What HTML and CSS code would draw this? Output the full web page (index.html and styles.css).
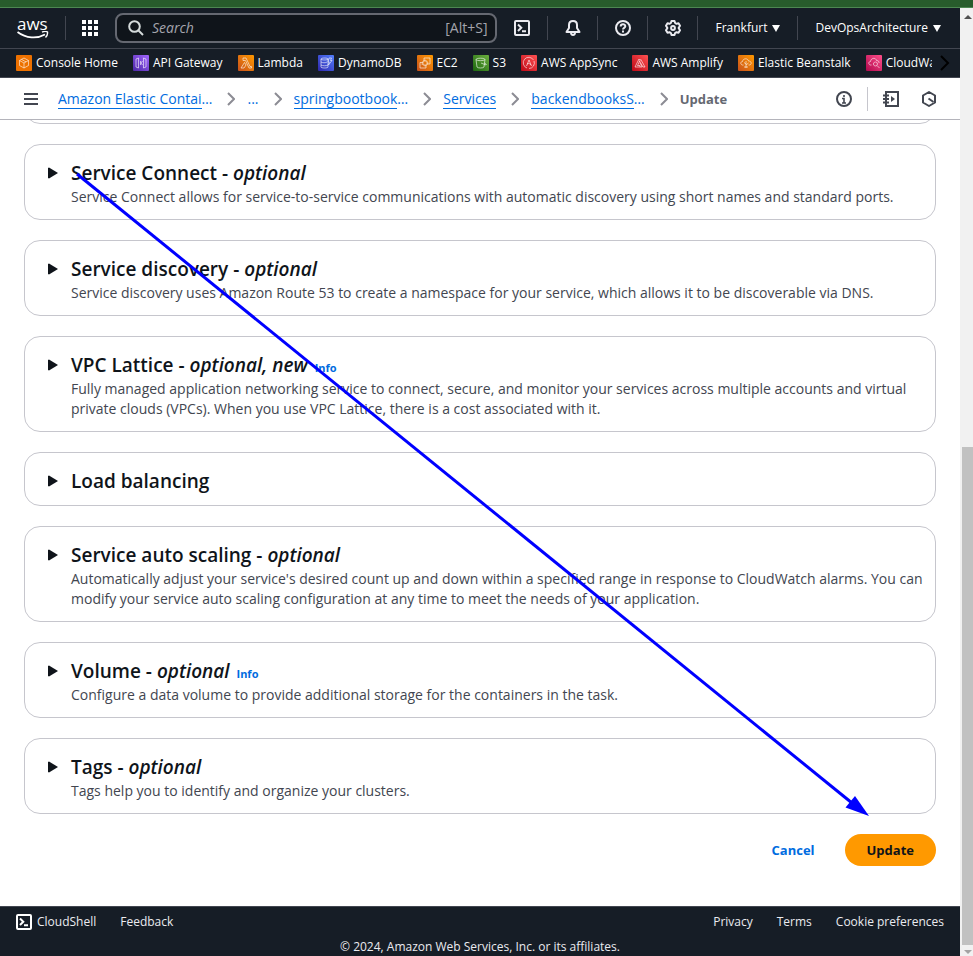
FILE: index.html
```html
<!DOCTYPE html>
<html lang="en">
<head>
<meta charset="utf-8">
<title>Update service</title>
<link rel="stylesheet" href="styles.css">
</head>
<body>
<svg width="0" height="0" class="defs" aria-hidden="true">
  <defs>
    <linearGradient id="g-orange" x1="0" y1="1" x2="1" y2="0"><stop offset="0" stop-color="#c8511b"/><stop offset="1" stop-color="#ff9900"/></linearGradient>
    <linearGradient id="g-purple" x1="0" y1="1" x2="1" y2="0"><stop offset="0" stop-color="#4d27a8"/><stop offset="1" stop-color="#a166ff"/></linearGradient>
    <linearGradient id="g-blue" x1="0" y1="1" x2="1" y2="0"><stop offset="0" stop-color="#2e27ad"/><stop offset="1" stop-color="#527fff"/></linearGradient>
    <linearGradient id="g-green" x1="0" y1="1" x2="1" y2="0"><stop offset="0" stop-color="#1b660f"/><stop offset="1" stop-color="#6cae3e"/></linearGradient>
    <linearGradient id="g-red" x1="0" y1="1" x2="1" y2="0"><stop offset="0" stop-color="#bd0816"/><stop offset="1" stop-color="#ff5252"/></linearGradient>
    <linearGradient id="g-pink" x1="0" y1="1" x2="1" y2="0"><stop offset="0" stop-color="#b0084d"/><stop offset="1" stop-color="#ff4f8b"/></linearGradient>
  </defs>
</svg>
<div class="strip"></div>
<div class="view">
  <div class="page">
    <header>
      <div class="topbar">
        <a class="logo" href="#" aria-label="AWS">
          <span>aws</span>
          <svg width="32" height="8" viewBox="0 0 32 8" fill="none" stroke="#fff"><path d="M.5 1C9 7.500 20 8 28 3.500" stroke-width="1.800"/><path d="M25 1.200c2-1 4.500-.9 5.500-.2.300 2-.5 4-2 5.500" stroke-width="1.400"/></svg>
        </a>
        <i class="sep"></i>
        <button class="icon apps" aria-label="Services"><svg width="16" height="16" fill="#fff"><path d="M0 0h4v4H0zM6 0h4v4H6zM12 0h4v4h-4zM0 6h4v4H0zM6 6h4v4H6zM12 6h4v4h-4zM0 12h4v4H0zM6 12h4v4H6zM12 12h4v4h-4z"/></svg></button>
        <div class="search">
          <svg width="16" height="16" fill="none" stroke="#d5dbdb" stroke-width="2"><circle cx="6.500" cy="6.500" r="5.300"/><path d="m10.500 10.500 4.500 4.500"/></svg>
          <input type="text" placeholder="Search" aria-label="Search"><span>[Alt+S]</span>
        </div>
        <div class="tools">
          <button class="icon" aria-label="CloudShell"><svg width="16" height="16" fill="none" stroke="#ebebf0" stroke-width="2"><rect x="1" y="1" width="14" height="14" rx="1"/><path d="m4 4.500 3.300 3.200L4 11M8 11.200h4"/></svg></button>
          <button class="icon" aria-label="Notifications"><svg width="16" height="16" fill="none" stroke="#ebebf0" stroke-width="2"><path d="M8 1C5.200 1 4 3 4 5v3l-2.500 4h13L12 8V5c0-2-1.200-4-4-4Z" stroke-linejoin="round"/><path d="M6 12.500c0 3.200 4 3.200 4 0"/></svg></button>
          <button class="icon" aria-label="Help"><svg width="16" height="16" fill="none" stroke="#ebebf0" stroke-width="2"><circle cx="8" cy="8" r="7"/><path d="M5.700 6.500c0-3 4.600-3 4.600-.2C10.300 8 8 7.800 8 9.500M8 10.500v2"/></svg></button>
          <button class="icon" aria-label="Settings"><svg width="16" height="16" fill="none" stroke="#ebebf0" stroke-width="2"><path d="M6.500 1h3l.6 2 1.400.8 2-.5 1.500 2.500L13.600 8l1.400 2.200-1.500 2.500-2-.5-1.400.8-.6 2h-3l-.6-2-1.400-.8-2 .5L1 10.200 2.400 8 1 5.800l1.500-2.500 2 .5L5.900 3z" stroke-linejoin="round"/><circle cx="8" cy="8" r="1.900"/></svg></button>
          <button class="menu region">Frankfurt <svg width="8" height="7"><path d="M0 0h8L4 7z" fill="#fff"/></svg></button>
          <button class="menu">DevOpsArchitecture <svg width="8" height="7"><path d="M0 0h8L4 7z" fill="#fff"/></svg></button>
        </div>
      </div>
      <nav class="favorites" aria-label="Favorites">
        <div class="fav-list">
          <a href="#"><svg viewBox="0 0 16 16"><rect width="16" height="16" rx="1" fill="#ed7100"/><path d="m8 3 4.500 2.500v5L8 13l-4.500-2.500v-5zM3.500 5.500 8 8l4.500-2.500M8 8v5M5.500 4.400l4.500 2.500"/></svg>Console Home</a>
          <a href="#"><svg viewBox="0 0 16 16"><rect width="16" height="16" rx="1" fill="url(#g-purple)"/><path d="M5.500 3 3 4v8l2.500 1zM10.500 3 13 4v8l-2.500 1zM7.500 6v4M9.500 6 8 8l1.500 2"/></svg>API Gateway</a>
          <a href="#"><svg viewBox="0 0 16 16"><rect width="16" height="16" rx="1" fill="url(#g-orange)"/><path d="M5 3h3l4 8.500h1.500V13H11L7.500 5.500H5zM6.500 7.500 3 13h3l2-3z"/></svg>Lambda</a>
          <a href="#"><svg viewBox="0 0 16 16"><rect width="16" height="16" rx="1" fill="url(#g-blue)"/><path d="M3 4c0-1.300 7-1.300 7 0v8c0 1.300-7 1.300-7 0zM3 4c0 1.300 7 1.300 7 0M3 7c1 1 5 1 6 0M3 10c1 1 6 1 7 0M11 3h2.500l-1 2.500h1.500L10.500 10l.8-3H10z"/></svg>DynamoDB</a>
          <a href="#"><svg viewBox="0 0 16 16"><rect width="16" height="16" rx="1" fill="url(#g-orange)"/><path d="M6 6h4v4H6zM7 6V3h6v6h-3M6 7.500H3V13h6v-3M8 6V4.500M10 8h1.500M8 10v1.500M4.500 9H6"/></svg>EC2</a>
          <a href="#"><svg viewBox="0 0 16 16"><rect width="16" height="16" rx="1" fill="url(#g-green)"/><path d="M3 4.500c0-1.700 9-1.700 9 0l-1 7.500c-.5 1.300-6.500 1.300-7 0zM3 4.500c1 1.500 8 1.500 9 0M8 8l5 2c1-.5-.5-1.500-1.500-2"/></svg>S3</a>
          <a href="#"><svg viewBox="0 0 16 16"><rect width="16" height="16" rx="1" fill="url(#g-red)"/><path d="M12.500 5A5.500 5.500 0 1 0 6 13M8 13.500A5.500 5.500 0 0 0 13 6M5.500 11 8 5l2.500 6M6 9c1.500-1 3-.5 4 1"/></svg>AWS AppSync</a>
          <a href="#"><svg viewBox="0 0 16 16"><rect width="16" height="16" rx="1" fill="url(#g-red)"/><path d="M7 4 3 12h5V10.500H5.500L8 5.500zM8.500 4 13 12h-2L7.500 6M8 8l2.200 4H8"/></svg>AWS Amplify</a>
          <a href="#"><svg viewBox="0 0 16 16"><rect width="16" height="16" rx="1" fill="url(#g-orange)"/><path d="M5.500 10H4.500C2 9.500 2.500 6.500 4.500 6.500 5 3 10 3 10.500 6 14 6 14 10 11 10h-.5M8 13V6M8 9 6 7.500M8 10l2.500-2M6 12h4"/></svg>Elastic Beanstalk</a>
          <a href="#"><svg viewBox="0 0 16 16"><rect width="16" height="16" rx="1" fill="url(#g-pink)"/><path d="M5.500 10H4.500C2 9.500 2.500 6.500 4.500 6.500 5 2.500 10 2.500 10.500 5.500 13 5.500 13 7 13 8M9.500 7a2 2 0 1 1-.1 0M11 10.500l2.500 2.500"/></svg>CloudWatch</a>
        </div>
        <button class="more" aria-label="More favorites"><svg width="10" height="16" fill="none" stroke="#000" stroke-width="2"><path d="m1 1 7 7-7 7"/></svg></button>
      </nav>
    </header>
    <div class="crumbbar">
      <button class="burger" aria-label="Open navigation"><svg width="14" height="12" fill="#424650"><path d="M0 0h14v2H0zM0 5h14v2H0zM0 10h14v2H0z"/></svg></button>
      <nav class="crumbs" aria-label="Breadcrumbs">
        <a href="#"><u>Amazon Elastic Contai</u>…</a><svg class="chev"><path d="m1 1 6 6-6 6"/></svg>
        <a href="#">...</a><svg class="chev"><path d="m1 1 6 6-6 6"/></svg>
        <a href="#"><u>springbootbook</u>…</a><svg class="chev"><path d="m1 1 6 6-6 6"/></svg>
        <a href="#"><u>Services</u></a><svg class="chev"><path d="m1 1 6 6-6 6"/></svg>
        <a href="#"><u>backendbooksS</u>…</a><svg class="chev"><path d="m1 1 6 6-6 6"/></svg>
        <b>Update</b>
      </nav>
      <div class="panels">
        <button aria-label="Info"><svg width="16" height="16" fill="none" stroke="#424650" stroke-width="2"><circle cx="8" cy="8" r="7"/><path d="M8 4v2M6 7.500h2V12M6 12h4" stroke-width="1.600"/></svg></button>
        <i></i>
        <button aria-label="Tutorials"><svg width="16" height="16" fill="none" stroke="#424650" stroke-width="2"><path d="M3 3V1h12v14H3v-2M0 4.500h6M0 8h6M0 11.500h6M3 3v10"/><path d="m8 5 4 3-4 3z" fill="#424650" stroke="none"/></svg></button>
        <button aria-label="Assistant"><svg width="16" height="16" fill="none" stroke="#424650" stroke-width="2"><path d="m8 1 6 3.500v7L8 15l-6-3.500v-7z" stroke-linejoin="round"/><path d="m7.500 7.500 5 3.500"/></svg></button>
      </div>
    </div>
    <main>
      <div class="card tail"></div>
      <section class="card"><svg class="tri"><path d="M0 1v10l1 .5L10 6 1 .5z"/></svg><div><h2>Service Connect - <em>optional</em></h2><p>Service Connect allows for service-to-service communications with automatic discovery using short names and standard ports.</p></div></section>
      <section class="card"><svg class="tri"><path d="M0 1v10l1 .5L10 6 1 .5z"/></svg><div><h2>Service discovery - <em>optional</em></h2><p>Service discovery uses Amazon Route 53 to create a namespace for your service, which allows it to be discoverable via DNS.</p></div></section>
      <section class="card"><svg class="tri"><path d="M0 1v10l1 .5L10 6 1 .5z"/></svg><div><h2>VPC Lattice - <em>optional, new</em> <a href="#">Info</a></h2><p>Fully managed application networking service to connect, secure, and monitor your services across multiple accounts and virtual private clouds (VPCs). When you use VPC Lattice, there is a cost associated with it.</p></div></section>
      <section class="card"><svg class="tri"><path d="M0 1v10l1 .5L10 6 1 .5z"/></svg><div><h2>Load balancing</h2></div></section>
      <section class="card"><svg class="tri"><path d="M0 1v10l1 .5L10 6 1 .5z"/></svg><div><h2>Service auto scaling - <em>optional</em></h2><p>Automatically adjust your service's desired count up and down within a specified range in response to CloudWatch alarms. You can modify your service auto scaling configuration at any time to meet the needs of your application.</p></div></section>
      <section class="card"><svg class="tri"><path d="M0 1v10l1 .5L10 6 1 .5z"/></svg><div><h2>Volume - <em>optional</em> <a href="#">Info</a></h2><p>Configure a data volume to provide additional storage for the containers in the task.</p></div></section>
      <section class="card"><svg class="tri"><path d="M0 1v10l1 .5L10 6 1 .5z"/></svg><div><h2>Tags - <em>optional</em></h2><p>Tags help you to identify and organize your clusters.</p></div></section>
      <div class="actions"><button class="cancel">Cancel</button><button class="primary">Update</button></div>
      <svg class="arrow" width="800" height="660" aria-hidden="true"><path d="M5 4 780 633" stroke="#00f" stroke-width="3"/><path d="m797 646-23.500-8.500 9.500-11.500z" fill="#00f"/></svg>
    </main>
    <footer>
      <div class="foot-row">
        <a href="#"><svg width="16" height="16" fill="none" stroke="#fff" stroke-width="2"><rect x="1" y="1" width="14" height="14" rx="1"/><path d="m4 4.500 3.300 3.200L4 11M8 11.200h4"/></svg>CloudShell</a><a href="#">Feedback</a>
        <span></span><a href="#">Privacy</a><a href="#">Terms</a><a href="#">Cookie preferences</a>
      </div>
      <div class="copy">© 2024, Amazon Web Services, Inc. or its affiliates.</div>
    </footer>
  </div>
  <div class="scroll" aria-hidden="true"><svg width="8" height="4"><path d="M0 4h8L4 0z" fill="#505050"/></svg><div></div><svg width="8" height="4"><path d="M0 0h8L4 4z" fill="#a3a3a3"/></svg></div>
</div>
</body>
</html>
```
FILE: styles.css
```css
* { box-sizing: border-box; }
body { margin: 0; font: 14px/20px "Open Sans", sans-serif; color: #0f141a; background: #fff; }
button { font: inherit; color: inherit; background: none; border: 0; padding: 0; }
a { color: #006ce0; text-decoration: none; }
svg { display: block; flex: none; }
.defs { position: absolute; }
.strip { height: 8px; background: #285c2c; border-bottom: 1px solid #4d8752; }
.view { display: flex; }
.page { flex: 1; min-width: 0; }
header { background: #161d26; color: #fff; border-bottom: 1px solid #424650; }
.topbar { display: flex; align-items: center; height: 41px; border-bottom: 1px solid #424650; }
.logo { width: 65px; padding-left: 17px; color: #fff; }
.logo span { display: block; font: 500 17px/14px "Open Sans", sans-serif; }
.sep { width: 1px; height: 24px; background: #424650; }
.icon { display: flex; justify-content: center; align-items: center; width: 50px; }
.apps { width: 48px; }
.search { flex: 1; min-width: 0; display: flex; align-items: center; height: 30px; border: 2px solid #656871; border-radius: 8px; background: #0f141a; padding: 0 8px 0 11px; margin-left: 1px; gap: 8px; color: #a4a4ad; }
.search input { flex: 1; min-width: 0; border: 0; outline: 0; padding: 0; background: none; font: inherit; color: #fff; }
.search input::placeholder { color: #a4a4ad; font-style: italic; opacity: 1; }
.tools { display: flex; align-items: center; }
.tools button + button { border-left: 1px solid #424650; }
.tools button { height: 24px; }
.menu { display: flex; align-items: center; gap: 5px; font-size: 12px; padding: 0 19px 0 17px; }
.region { padding-right: 17px; }
.favorites { display: flex; height: 28px; align-items: center; padding-left: 16px; }
.fav-list { flex: 1; min-width: 0; display: flex; gap: 15px; overflow: hidden; }
.fav-list a { display: flex; align-items: center; gap: 4px; white-space: nowrap; font-size: 12px; color: #fff; }
.fav-list svg { width: 16px; height: 16px; fill: none; }
.fav-list path { stroke: #fff; stroke-width: .6; }
.more { width: 28px; padding-left: 8px; }
.crumbbar { display: flex; align-items: center; height: 42px; border-bottom: 1px solid #b4b4bb; }
.burger { width: 58px; padding-left: 24px; }
.crumbs { display: flex; align-items: center; flex: 1; white-space: nowrap; }
.crumbs u { text-decoration: none; border-bottom: 1px solid #006ce0; }
.chev { width: 8px; height: 14px; fill: none; stroke: #8c8c94; stroke-width: 2; margin: 0 12px 0 15px; }
.crumbs b { font-size: 13px; color: #656871; }
.panels { display: flex; align-items: center; padding-right: 23px; }
.panels i { width: 1px; height: 24px; background: #c6c6cd; margin: 0 15px; }
.panels button + button { margin-left: 22px; }
main { position: relative; padding: 0 24px 40px; display: flex; flex-direction: column; gap: 20px; }
.card { display: flex; border: 1px solid #c6c6cd; border-radius: 16px; padding: 16px 8px 12px 23px; gap: 13px; }
.tail { height: 32px; margin-top: -28px; clip-path: inset(28px 0 0 0); }
.tri { width: 10px; height: 12px; margin-top: 6px; fill: #0f141a; }
h2 { margin: 0; font-size: 19px; line-height: 24px; font-weight: 600; }
h2 a { font-size: 11px; line-height: 12px; font-weight: 700; margin-left: 2px; }
p { margin: 2px 0 0; color: #424650; }
.actions { display: flex; justify-content: flex-end; gap: 8px; font-size: 13px; font-weight: 700; }
.actions button { height: 32px; padding: 0 22px; border-radius: 16px; }
.cancel { color: #006ce0; }
.primary { background: #ff9900; }
.arrow { position: absolute; left: 72px; top: 50px; }
footer { background: #161d26; color: #ebebf0; border-top: 1px solid #424650; font-size: 12px; }
footer a { display: flex; align-items: center; gap: 5px; color: inherit; }
.foot-row { display: flex; gap: 24px; padding: 5px 16px; }
.foot-row span { flex: 1; margin-right: -24px; }
.copy { text-align: center; line-height: 19px; }
.scroll { width: 13px; display: flex; flex-direction: column; align-items: center; background: #f1f1f1; padding: 7px 0 2px 2px; }
.scroll div { flex: 1; width: 100%; margin: 428px 0 5px; background: #c1c1c1; }
```
